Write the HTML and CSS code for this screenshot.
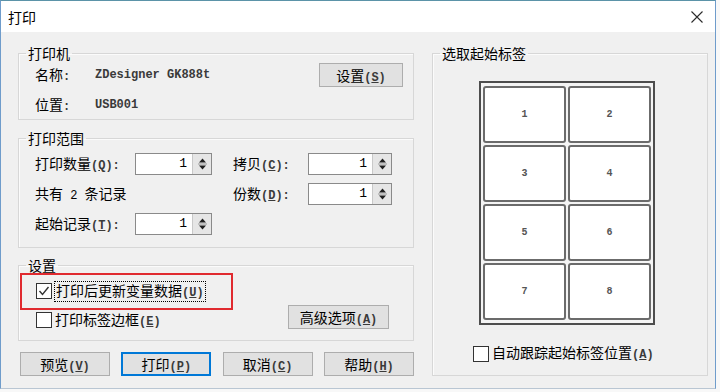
FILE: index.html
```html
<!DOCTYPE html>
<html lang="zh-CN">
<head>
<meta charset="utf-8">
<title>打印</title>
<link rel="stylesheet" href="styles.css">
</head>
<body>
<div class="window">
  <div class="titlebar">
    <span class="title">打印</span>
    <svg class="close" width="12" height="12" viewBox="0 0 12 12"><path d="M0.5 0.5 L11.5 11.5 M11.5 0.5 L0.5 11.5" stroke="#2b2b2b" stroke-width="1.1" fill="none"/></svg>
  </div>
  <div class="content">
    <div class="left">
      <fieldset class="group g-printer">
        <legend>打印机</legend>
        <div class="inner printer-grid">
          <span class="lbl">名称<span class="mn">:</span></span>
          <span class="val">ZDesigner GK888t</span>
          <button class="btn btn-setup">设置<span class="mn">(<u>S</u>)</span></button>
          <span class="lbl">位置<span class="mn">:</span></span>
          <span class="val">USB001</span>
        </div>
      </fieldset>

      <fieldset class="group g-range">
        <legend>打印范围</legend>
        <div class="inner range-grid">
          <span class="lbl">打印数量<span class="mn">(<u>Q</u>):</span></span>
          <div class="spin spin-a"><span class="spin-val">1</span><span class="spin-btn"><svg width="9" height="14" viewBox="0 0 9 14"><path d="M4.5 1.5 L8 5.5 L1 5.5 Z M1 8.5 L8 8.5 L4.5 12.5 Z" fill="#1e1e1e"/><path d="M0 7 H9" stroke="#9a9a9a" stroke-width="1"/></svg></span></div>
          <span class="lbl lbl-r">拷贝<span class="mn">(<u>C</u>):</span></span>
          <div class="spin spin-b"><span class="spin-val">1</span><span class="spin-btn"><svg width="9" height="14" viewBox="0 0 9 14"><path d="M4.5 1.5 L8 5.5 L1 5.5 Z M1 8.5 L8 8.5 L4.5 12.5 Z" fill="#1e1e1e"/><path d="M0 7 H9" stroke="#9a9a9a" stroke-width="1"/></svg></span></div>

          <span class="lbl span2">共有<span class="mn sp"> 2 </span>条记录</span>
          <span class="lbl lbl-r">份数<span class="mn">(<u>D</u>):</span></span>
          <div class="spin spin-b"><span class="spin-val">1</span><span class="spin-btn"><svg width="9" height="14" viewBox="0 0 9 14"><path d="M4.5 1.5 L8 5.5 L1 5.5 Z M1 8.5 L8 8.5 L4.5 12.5 Z" fill="#1e1e1e"/><path d="M0 7 H9" stroke="#9a9a9a" stroke-width="1"/></svg></span></div>

          <span class="lbl">起始记录<span class="mn">(<u>T</u>):</span></span>
          <div class="spin spin-a"><span class="spin-val">1</span><span class="spin-btn"><svg width="9" height="14" viewBox="0 0 9 14"><path d="M4.5 1.5 L8 5.5 L1 5.5 Z M1 8.5 L8 8.5 L4.5 12.5 Z" fill="#1e1e1e"/><path d="M0 7 H9" stroke="#9a9a9a" stroke-width="1"/></svg></span></div>
        </div>
      </fieldset>

      <fieldset class="group g-settings">
        <legend>设置</legend>
        <div class="inner settings-grid">
          <label class="check">
            <span class="box"><svg width="14" height="14" viewBox="0 0 14 14"><path d="M2.5 7 L5.5 10.5 L11.5 3" stroke="#333" stroke-width="1.4" fill="none"/></svg></span>
            <span class="focus">打印后更新变量数据<span class="mn">(<u>U</u>)</span></span>
          </label>
          <label class="check check-2">
            <span class="box"></span>
            <span>打印标签边框<span class="mn">(<u>E</u>)</span></span>
          </label>
          <button class="btn btn-adv">高级选项<span class="mn">(<u>A</u>)</span></button>
          <div class="highlight"></div>
        </div>
      </fieldset>

      <div class="actions">
        <button class="btn">预览<span class="mn">(<u>V</u>)</span></button>
        <button class="btn btn-default">打印<span class="mn">(<u>P</u>)</span></button>
        <button class="btn">取消<span class="mn">(<u>C</u>)</span></button>
        <button class="btn">帮助<span class="mn">(<u>H</u>)</span></button>
      </div>
    </div>

    <fieldset class="group g-labels">
      <legend>选取起始标签</legend>
      <div class="inner labels-inner">
        <div class="frame">
          <div class="cell">1</div><div class="cell">2</div>
          <div class="cell">3</div><div class="cell">4</div>
          <div class="cell">5</div><div class="cell">6</div>
          <div class="cell">7</div><div class="cell">8</div>
        </div>
        <label class="check check-auto">
          <span class="box"></span>
          <span>自动跟踪起始标签位置<span class="mn">(<u>A</u>)</span></span>
        </label>
      </div>
    </fieldset>
  </div>
</div>
</body>
</html>
```

FILE: styles.css
```css
* { box-sizing: border-box; }

body {
  margin: 0;
  background: #f8f8f8;
  font-family: "Noto Sans CJK SC", "Noto Sans", sans-serif;
  font-size: 14px;
  line-height: 16px;
  color: #000;
}

.window {
  width: 716px;
  height: 389px;
  background: #f0f0f0;
  border: 1px solid #6f9ccb;
  border-top-color: #5b93a8;
  border-bottom-color: #b9c6d3;
}

.titlebar {
  height: 31px;
  background: #fff;
  display: flex;
  align-items: center;
  justify-content: space-between;
  padding: 0 12px 0 7px;
}

.title { font-size: 14px; }

.close { display: block; }

.content {
  display: flex;
  align-items: flex-start;
  gap: 18px;
  padding: 13px 0 0 17px;
}

.left {
  width: 396px;
  display: flex;
  flex-direction: column;
}

.group {
  margin: 0;
  padding: 0;
  min-width: 0;
  border: 1px solid #d7d7d7;
  box-shadow: inset 1px 1px 0 #fbfbfb;
}

.group legend {
  margin-left: 7px;
  padding: 0 2px;
  font-size: 14px;
  line-height: 16px;
}

.mn {
  font-family: "Liberation Mono", "DejaVu Sans Mono", monospace;
  font-size: 12px;
  font-weight: bold;
  color: #3a3a3a;
}

.sp { white-space: pre; font-weight: normal; color: #000; }

u { text-underline-offset: 1px; }

.lbl, .val {
  display: block;
  align-self: center;
  white-space: nowrap;
}

.val {
  font-family: "Liberation Mono", "DejaVu Sans Mono", monospace;
  font-size: 12px;
  font-weight: bold;
  color: #3a3a3a;
}

/* group 1 */
.printer-grid {
  display: grid;
  grid-template-columns: 60px 1fr auto;
  grid-template-rows: 24px 20px;
  row-gap: 8px;
  padding: 2px 10px 4px 16px;
}

.btn {
  display: block;
  font-family: inherit;
  font-size: 14px;
  line-height: 22px;
  text-align: center;
  color: #000;
  background: #e1e1e1;
  border: 1px solid #adadad;
  border-radius: 0;
  padding: 0;
  height: 24px;
  margin: 0;
  white-space: nowrap;
}

.btn-setup { width: 84px; }

/* group 2 */
.g-range { margin-top: 10px; }

.range-grid {
  display: grid;
  grid-template-columns: 100px 77px 21px 75px 84px;
  grid-template-rows: repeat(3, 22px);
  row-gap: 8px;
  padding: 7px 0 12px 16px;
}

.lbl-r { grid-column: 4; }
.spin-b { grid-column: 5; }
.span2 { grid-column: 1 / 3; }

.spin {
  display: flex;
  height: 22px;
  background: #fff;
  border: 1px solid #8a8a8a;
}

.spin-val {
  flex: 1;
  display: flex;
  align-items: center;
  justify-content: flex-end;
  padding-right: 5px;
  font-family: "Liberation Mono", "DejaVu Sans Mono", monospace;
  font-size: 13px;
}

.spin-btn {
  width: 19px;
  background: #e6e6e6;
  border-left: 1px solid #c9c9c9;
  display: flex;
  align-items: center;
  justify-content: center;
}

.spin-btn svg { display: block; }

/* group 3 */
.g-settings { margin-top: 9px; }

.settings-grid {
  position: relative;
  display: grid;
  grid-template-columns: 1fr auto;
  grid-template-rows: 16px 24px;
  row-gap: 6px;
  padding: 10px 24px 11px 17px;
}

.check {
  display: flex;
  align-items: center;
  gap: 3px;
  white-space: nowrap;
}

.check-2 {
  grid-column: 1;
  grid-row: 2;
  align-self: end;
  margin-bottom: 1px;
  height: 16px;
}

.box {
  width: 16px;
  height: 16px;
  background: #fff;
  border: 1px solid #333;
  display: flex;
  align-items: center;
  justify-content: center;
  flex: none;
}

.box svg { display: block; }

.focus {
  outline: 1px dotted #000;
  outline-offset: 0;
  padding: 0 1px;
}

.btn-adv {
  grid-column: 2;
  grid-row: 2;
  width: 101px;
}

.highlight {
  position: absolute;
  left: 1px;
  top: 0;
  width: 213px;
  height: 37px;
  border: 2px solid #e02a2f;
  pointer-events: none;
}

/* actions */
.actions {
  margin-top: 11px;
  padding-left: 2px;
  display: flex;
  justify-content: space-between;
}

.actions .btn { width: 90px; }

.btn-default {
  border-color: #0078d7;
  box-shadow: inset 0 0 0 1px #0078d7;
}

/* right group */
.g-labels { width: 276px; }

.labels-inner {
  padding: 20px 0 13px 0;
}

.frame {
  display: grid;
  grid-template-columns: 83px 83px;
  grid-template-rows: repeat(4, 57px);
  gap: 2px;
  padding: 3px 2px;
  width: max-content;
  margin-left: 46px;
  border: 2px solid #4d4d4d;
  background: #f4f4f4;
}

.cell {
  background: #fff;
  border: 2px solid #6b6b6b;
  border-radius: 3px;
  display: flex;
  align-items: center;
  justify-content: center;
  font-family: "Liberation Mono", "DejaVu Sans Mono", monospace;
  font-size: 10px;
  font-weight: bold;
  color: #555;
}

.check-auto {
  margin: 20px 0 0 40px;
  height: 17px;
}
```
